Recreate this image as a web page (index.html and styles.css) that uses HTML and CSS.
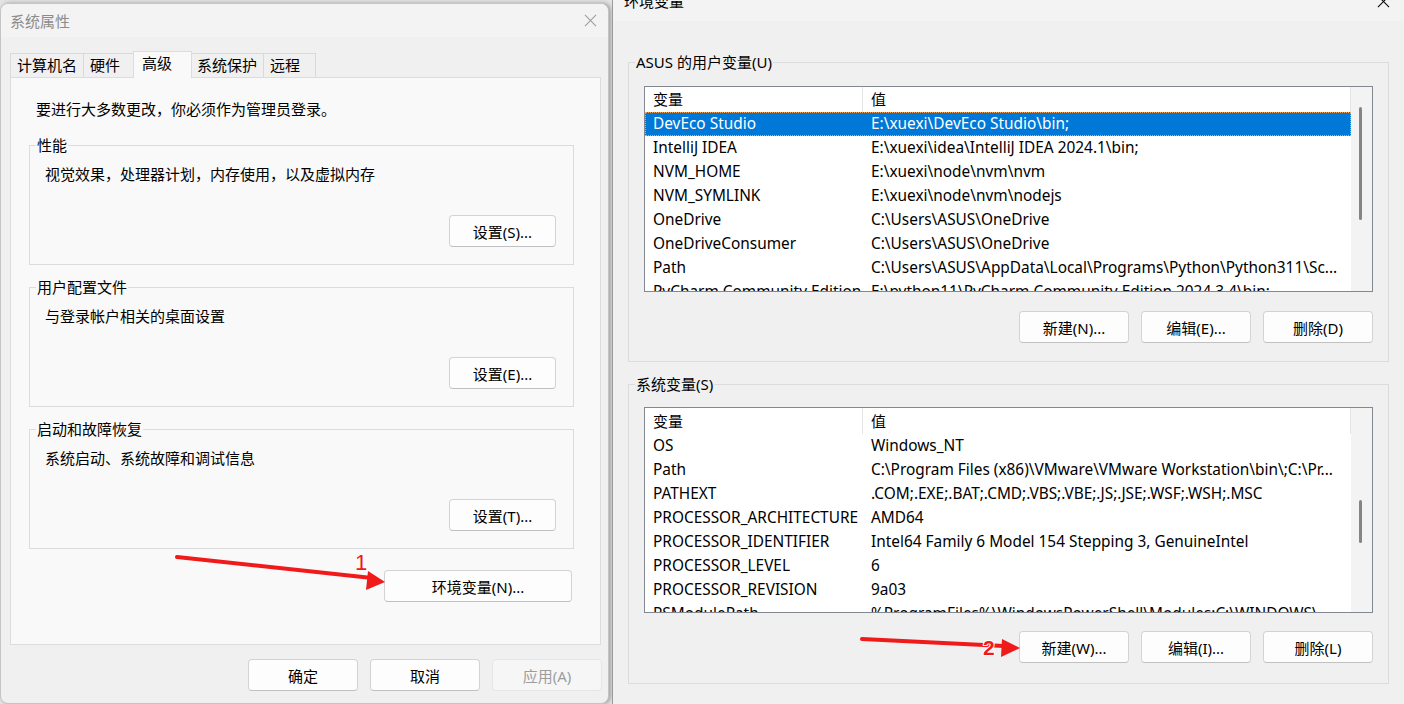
FILE: index.html
```html
<!DOCTYPE html>
<html lang="zh-CN">
<head>
    <meta charset="UTF-8" />
    <meta name="viewport" content="width=device-width, initial-scale=1.0"/>
    <title>系统属性 - 环境变量</title>
    <link rel="stylesheet" href="styles.css">
</head>
<body>
<div class="desktop">
    <!-- 系统属性 -->
    <div class="win win-sys">
        <div class="titlebar inactive">
            <span class="title">系统属性</span>
            <svg class="close" viewBox="0 0 14 14"><path d="M1 1 L13 13 M13 1 L1 13"/></svg>
        </div>

        <div class="tabs">
            <div class="tab">计算机名</div>
            <div class="tab">硬件</div>
            <div class="tab active">高级</div>
            <div class="tab">系统保护</div>
            <div class="tab">远程</div>
        </div>

        <div class="tab-panel">
            <p class="note">要进行大多数更改，你必须作为管理员登录。</p>

            <fieldset class="group">
                <legend>性能</legend>
                <p>视觉效果，处理器计划，内存使用，以及虚拟内存</p>
                <div class="btn-row"><button class="btn btn-set">设置(S)...</button></div>
            </fieldset>

            <fieldset class="group">
                <legend>用户配置文件</legend>
                <p>与登录帐户相关的桌面设置</p>
                <div class="btn-row"><button class="btn btn-set">设置(E)...</button></div>
            </fieldset>

            <fieldset class="group">
                <legend>启动和故障恢复</legend>
                <p>系统启动、系统故障和调试信息</p>
                <div class="btn-row"><button class="btn btn-set">设置(T)...</button></div>
            </fieldset>

            <div class="btn-row env-row"><button class="btn btn-env">环境变量(N)...</button></div>
        </div>

        <div class="footer">
            <button class="btn">确定</button>
            <button class="btn">取消</button>
            <button class="btn" disabled>应用(A)</button>
        </div>
    </div>

    <!-- 环境变量 -->
    <div class="win win-env">
        <div class="titlebar">
            <span class="title">环境变量</span>
            <svg class="close" viewBox="0 0 14 14"><path d="M1 1 L13 13 M13 1 L1 13"/></svg>
        </div>

        <div class="env-body">
            <fieldset class="env-group">
                <legend>ASUS 的用户变量(U)</legend>
                <div class="list">
                    <div class="list-main">
                        <div class="list-head"><div class="cell">变量</div><div class="cell">值</div></div>
                        <div class="row selected"><div class="cell">DevEco Studio</div><div class="cell">E:\xuexi\DevEco Studio\bin;</div></div>
                        <div class="row"><div class="cell">IntelliJ IDEA</div><div class="cell">E:\xuexi\idea\IntelliJ IDEA 2024.1\bin;</div></div>
                        <div class="row"><div class="cell">NVM_HOME</div><div class="cell">E:\xuexi\node\nvm\nvm</div></div>
                        <div class="row"><div class="cell">NVM_SYMLINK</div><div class="cell">E:\xuexi\node\nvm\nodejs</div></div>
                        <div class="row"><div class="cell">OneDrive</div><div class="cell">C:\Users\ASUS\OneDrive</div></div>
                        <div class="row"><div class="cell">OneDriveConsumer</div><div class="cell">C:\Users\ASUS\OneDrive</div></div>
                        <div class="row"><div class="cell">Path</div><div class="cell">C:\Users\ASUS\AppData\Local\Programs\Python\Python311\Sc...</div></div>
                        <div class="row"><div class="cell">PyCharm Community Edition</div><div class="cell">E:\python11\PyCharm Community Edition 2024.3.4\bin;</div></div>
                    </div>
                    <div class="scrollbar"><div class="thumb thumb-user"></div></div>
                </div>
                <div class="btn-row">
                    <button class="btn">新建(N)...</button>
                    <button class="btn">编辑(E)...</button>
                    <button class="btn">删除(D)</button>
                </div>
            </fieldset>

            <fieldset class="env-group sys">
                <legend>系统变量(S)</legend>
                <div class="list">
                    <div class="list-main">
                        <div class="list-head"><div class="cell">变量</div><div class="cell">值</div></div>
                        <div class="row"><div class="cell">OS</div><div class="cell">Windows_NT</div></div>
                        <div class="row"><div class="cell">Path</div><div class="cell">C:\Program Files (x86)\VMware\VMware Workstation\bin\;C:\Pr...</div></div>
                        <div class="row"><div class="cell">PATHEXT</div><div class="cell">.COM;.EXE;.BAT;.CMD;.VBS;.VBE;.JS;.JSE;.WSF;.WSH;.MSC</div></div>
                        <div class="row"><div class="cell">PROCESSOR_ARCHITECTURE</div><div class="cell">AMD64</div></div>
                        <div class="row"><div class="cell">PROCESSOR_IDENTIFIER</div><div class="cell">Intel64 Family 6 Model 154 Stepping 3, GenuineIntel</div></div>
                        <div class="row"><div class="cell">PROCESSOR_LEVEL</div><div class="cell">6</div></div>
                        <div class="row"><div class="cell">PROCESSOR_REVISION</div><div class="cell">9a03</div></div>
                        <div class="row"><div class="cell">PSModulePath</div><div class="cell">%ProgramFiles%\WindowsPowerShell\Modules;C:\WINDOWS\...</div></div>
                    </div>
                    <div class="scrollbar"><div class="thumb thumb-sys"></div></div>
                </div>
                <div class="btn-row">
                    <button class="btn">新建(W)...</button>
                    <button class="btn">编辑(I)...</button>
                    <button class="btn">删除(L)</button>
                </div>
            </fieldset>
        </div>
    </div>
</div>

<!-- 标注箭头 -->
<svg class="annotations" viewBox="0 0 1404 704">
    <line class="arrow-line" x1="177" y1="557" x2="372" y2="578"/>
    <polygon class="arrow-head" points="385,582 368,571 366,590"/>
    <text class="mark mark-1" x="355" y="570">1</text>

    <line class="arrow-line" x1="862" y1="639" x2="1004" y2="646"/>
    <polygon class="arrow-head" points="1020,648 1002,639 1001,657"/>
    <text class="mark mark-2" x="983" y="655">2</text>
</svg>
</body>
</html>
```

FILE: styles.css
```css
* {
    box-sizing: border-box;
}

body {
    margin: 0;
    width: 1404px;
    height: 704px;
    overflow: hidden;
    position: relative;
    background: #e4e4e4;
    font-family: "Noto Sans", "Noto Sans CJK SC", sans-serif;
    font-size: 15px;
    color: #000;
}

p {
    margin: 0;
    line-height: 20px;
}

.desktop {
    display: flex;
    align-items: flex-start;
    height: 704px;
}

.win {
    display: flex;
    flex-direction: column;
    flex-shrink: 0;
    background: #f0f0f0;
}

/* ---------- 系统属性 ---------- */
.win-sys {
    width: 609px;
    height: 701px;
    margin-top: 3px;
    border: 1px solid #c4c4c4;
    border-radius: 8px;
    box-shadow: 2px 0 4px rgba(0, 0, 0, 0.3);
    overflow: hidden;
}

.titlebar {
    display: flex;
    align-items: center;
    justify-content: space-between;
    flex-shrink: 0;
    background: #f3f3f3;
}

.title {
    line-height: 20px;
}

.close {
    width: 13px;
    height: 13px;
    display: block;
}

.close path {
    stroke: #000;
    stroke-width: 1.1;
    fill: none;
}

.inactive .title {
    color: #8c8c8c;
}

.inactive .close path {
    stroke: #9a9a9a;
}

.win-sys .titlebar {
    height: 33px;
    padding: 0 11px 0 9px;
}

.tabs {
    display: flex;
    align-items: flex-end;
    height: 26px;
    margin: 14px 0 0 9px;
}

.tab {
    height: 24px;
    min-width: 53px;
    padding: 0 6px;
    line-height: 22px;
    border: 1px solid #d9d9d9;
    border-bottom: none;
    background: #f0f0f0;
    margin-right: -1px;
}

.tab.active {
    height: 27px;
    min-width: 59px;
    margin: 0 -2px -1px -2px;
    padding: 0 8px;
    line-height: 23px;
    background: #f9f9f9;
    border-color: #dcdcdc;
    position: relative;
    z-index: 1;
}

.tab-panel {
    height: 568px;
    margin: 0 7px 0 9px;
    padding: 21px 26px 0 18px;
    background: #f9f9f9;
    border: 1px solid #dcdcdc;
}

.note {
    margin: 0 0 16px 7px;
}

.group {
    margin: 0;
    padding: 9px 17px 17px 15px;
    border: 1px solid #dcdcdc;
}

.group + .group {
    margin-top: 12px;
}

.group legend,
.env-group legend {
    padding: 0 1px;
    margin-left: -9px;
    line-height: 20px;
}

.btn-row {
    display: flex;
    justify-content: flex-end;
    gap: 12px;
}

.group .btn-row {
    margin-top: 31px;
}

.env-row {
    margin-top: 21px;
    padding-right: 2px;
}

.footer {
    display: flex;
    justify-content: flex-end;
    gap: 12px;
    padding: 14px 6px 0 0;
}

.btn {
    width: 110px;
    height: 32px;
    padding: 0;
    font: inherit;
    color: #000;
    background: #fdfdfd;
    border: 1px solid #d3d3d3;
    border-bottom-color: #c0c0c0;
    border-radius: 4px;
}

.btn-set {
    width: 107px;
}

.btn-env {
    width: 188px;
}

.btn:disabled {
    color: #9d9d9d;
    background: #f6f6f6;
    border-color: #e6e6e6;
}

/* ---------- 环境变量 ---------- */
.win-env {
    width: 800px;
    height: 723px;
    margin-top: -19px;
    margin-left: 3px;
    border-left: 1px solid #9a9a9a;
}

.win-env .titlebar {
    height: 40px;
    padding: 0 22px 0 11px;
}

.env-body {
    padding: 31px 0 0 15px;
}

.env-group {
    width: 761px;
    margin: 0;
    padding: 14px 15px 18px 15px;
    border: 1px solid #dcdcdc;
}

.env-group.sys {
    margin-top: 12px;
    padding: 13px 15px 20px 15px;
}

.env-group .btn-row {
    margin-top: 19px;
}

.env-group.sys .btn-row {
    margin-top: 18px;
}

.list {
    display: flex;
    height: 206px;
    border: 1px solid #828790;
    background: #fff;
    overflow: hidden;
    font-size: 15.4px;
}

.list-main {
    flex: 1;
    min-width: 0;
    overflow: hidden;
}

.list-head,
.row {
    display: grid;
    grid-template-columns: 218px 1fr;
}

.list-head {
    height: 25px;
    line-height: 25px;
    font-size: 15px;
}

.sys .list-head {
    height: 26px;
    line-height: 26px;
}

.list-head .cell {
    border-right: 1px solid #e5e5e5;
}

.row {
    height: 24px;
    line-height: 24px;
}

.cell {
    padding: 0 2px 0 8px;
    white-space: nowrap;
    overflow: hidden;
    text-overflow: ellipsis;
}

.row .cell:first-child {
    padding-right: 0;
    text-overflow: clip;
}

.row.selected {
    background: #0078d7;
    color: #fff;
    outline: 1px dotted #f0a860;
    outline-offset: -1px;
}

.scrollbar {
    width: 21px;
    flex-shrink: 0;
    background: #f3f3f3;
}

.thumb {
    width: 3px;
    margin-left: 8px;
    border-radius: 2px;
    background: #858585;
}

.thumb-user {
    height: 113px;
    margin-top: 20px;
}

.thumb-sys {
    height: 43px;
    margin-top: 92px;
}

/* ---------- 标注 ---------- */
.annotations {
    position: absolute;
    left: 0;
    top: 0;
    width: 1404px;
    height: 704px;
    pointer-events: none;
}

.arrow-line {
    stroke: #f01a1a;
    stroke-width: 4;
    stroke-linecap: round;
}

.arrow-head {
    fill: #f01a1a;
}

.mark {
    font-family: "Liberation Sans", sans-serif;
    fill: #f01a1a;
}

.mark-1 {
    font-size: 22px;
}

.mark-2 {
    font-size: 21px;
    font-weight: bold;
    stroke: #fff;
    stroke-width: 2;
    paint-order: stroke;
}
```
